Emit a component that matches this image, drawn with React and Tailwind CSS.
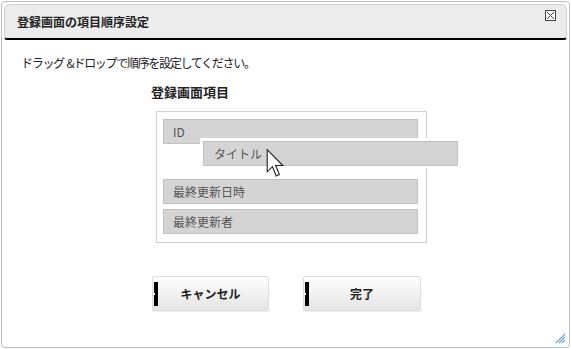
import React from "react";

const items = ["ID", null, "最終更新日時", "最終更新者"];

const Item = ({ label }) => (
  <div className="h-[25px] border border-[#c2c2c2] bg-[#d4d4d4] pl-[9px] flex items-center text-[12px] text-[#555]">
    {label}
  </div>
);

const Button = ({ children }) => (
  <button className="relative w-full h-[35px] rounded-[2px] border border-[#dcdcdc] bg-gradient-to-b from-white to-[#e4e4e4] shadow-[0_1px_1px_rgba(0,0,0,0.08)] text-[12px] font-bold text-[#222] flex items-center justify-center">
    <span className="absolute left-[1px] top-[5px] h-[24px] w-[4px] bg-black" />
    <span className="absolute left-[1px] top-[16px] h-[2px] w-[1px] bg-white" />
    {children}
  </button>
);

export default function App() {
  return (
    <div className="w-[571px] h-[349px] bg-white font-['Noto_Sans_CJK_JP','Noto_Sans',sans-serif] text-[#222]">
      <div className="relative m-px h-[347px] w-[569px] rounded-[4px] border border-[#bdbdbd] p-[2px] flex flex-col">
        {/* Header */}
        <div className="h-[36px] rounded-t-[6px] rounded-b-[3px] bg-[#ececec] border border-[#d4d4d4] border-b-2 border-b-black flex justify-between pl-[12px] pr-[10px]">
          <div className="self-center text-[12px] font-bold">登録画面の項目順序設定</div>
          <div className="mt-[5px] h-[11px] w-[11px] border border-[#444] bg-white">
            <svg viewBox="0 0 9 9" className="h-[9px] w-[9px]">
              <path d="M1 1 L8 8 M8 1 L1 8" stroke="#444" strokeWidth="1" />
            </svg>
          </div>
        </div>

        {/* Body */}
        <div className="flex flex-col pl-[17px] pt-[15px]">
          <div className="text-[12px] leading-[16px] tracking-[-1.3px] whitespace-pre">
            {"ドラッグ  &ドロップで順序を設定してください。"}
          </div>
          <div className="ml-[130px] mt-[12px] text-[13px] leading-[17px] font-bold">
            登録画面項目
          </div>
          <div className="relative ml-[135px] mt-[11px] w-[271px] h-[132px] border border-[#cfcfcf] bg-white pl-[6px] pr-[8px] pt-[7px] pb-[8px] flex flex-col gap-[5px]">
            {items.map((label, i) =>
              label ? <Item key={i} label={label} /> : <div key={i} className="h-[25px]" />
            )}

            {/* Dragged item */}
            <div className="absolute left-[43px] top-[26px] border-[3px] border-white">
              <div className="w-[255px] h-[25px] border border-[#c2c2c2] bg-[#d4d4d4] pl-[10px] flex items-center text-[12px] text-[#555]">
                タイトル
              </div>
            </div>

            {/* Cursor */}
            <svg
              viewBox="0 0 13 21"
              className="absolute left-[109px] top-[37px] h-[29px] w-[19px]"
            >
              <path
                d="M0.5 0.5 L0.5 16.5 L4.3 12.8 L7 19.5 L9.3 18.5 L6.6 12 L11.8 12 Z"
                fill="white"
                stroke="#222"
                strokeWidth="0.8"
                strokeLinejoin="miter"
              />
            </svg>
          </div>

          <div className="ml-[131px] mt-[33px] flex gap-[34px]">
            <div className="w-[117px]">
              <Button>キャンセル</Button>
            </div>
            <div className="w-[118px]">
              <Button>完了</Button>
            </div>
          </div>
        </div>

        {/* Resize grip */}
        <svg viewBox="0 0 11 11" className="absolute right-[3px] bottom-[3px] h-[11px] w-[11px]">
          <path d="M10 1 L1 10 M10 4 L4 10 M10 7 L7 10" stroke="#6fa3d8" strokeWidth="1.2" />
        </svg>
      </div>
    </div>
  );
}
